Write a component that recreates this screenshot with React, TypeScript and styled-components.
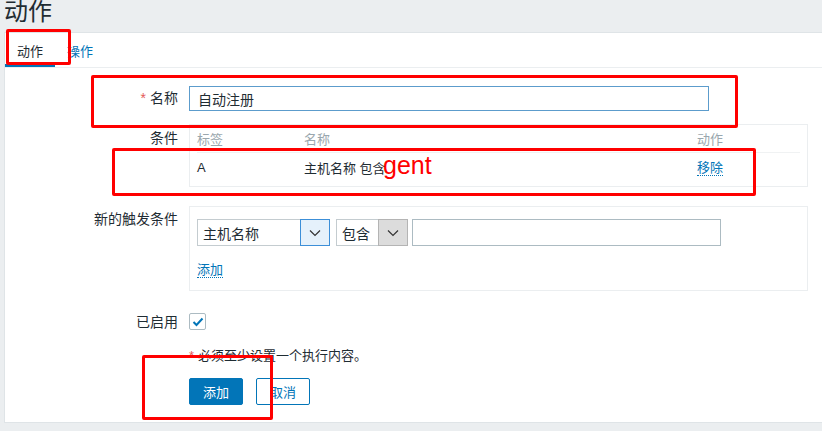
import styled, { createGlobalStyle } from 'styled-components';

const GlobalStyle = createGlobalStyle`
  html, body {
    margin: 0;
    padding: 0;
    background: #ebeef0;
    font-family: "Liberation Sans", "Noto Sans CJK SC", sans-serif;
    color: #1f2c33;
  }
  * {
    box-sizing: border-box;
  }
`;

const blue = '#0275b8';

const Page = styled.div`
  position: relative;
  width: 822px;
  height: 431px;
  overflow: hidden;
`;

const Header = styled.div`
  height: 32px;
  padding-left: 4px;
  display: flex;
  align-items: flex-end;
`;

const Title = styled.h1`
  margin: 0 0 8px 0;
  font-size: 24px;
  line-height: 24px;
  font-weight: normal;
  color: #1f2c33;
`;

const Panel = styled.div`
  margin-left: 4px;
  height: 391px;
  background: #fff;
  border: 1px solid #dfe4e7;
  border-right: none;
`;

const Tabs = styled.div`
  display: flex;
  height: 35px;
  border-bottom: 1px solid #ebeef0;
`;

const Tab = styled.div<{ $active?: boolean }>`
  padding: 0 12px;
  padding-top: 3px;
  display: flex;
  align-items: center;
  font-size: 13px;
  color: ${(p) => (p.$active ? '#1f2c33' : blue)};
  border-bottom: 3px solid ${(p) => (p.$active ? blue : 'transparent')};
`;

const Form = styled.div`
  display: grid;
  grid-template-columns: 173px 619px;
  column-gap: 11px;
  padding-top: 18px;
  font-size: 14px;
`;

const Label = styled.div<{ $top: number }>`
  text-align: right;
  padding-top: ${(p) => p.$top}px;
  line-height: 16px;
`;

const Star = styled.span`
  color: #e45959;
  margin-right: 4px;
`;

const Cell = styled.div<{ $mb: number }>`
  margin-bottom: ${(p) => p.$mb}px;
`;

const TextInput = styled.div<{ $w: number; $h: number; $border: string }>`
  width: ${(p) => p.$w}px;
  height: ${(p) => p.$h}px;
  border: 1px solid ${(p) => p.$border};
  padding: 0 8px;
  display: flex;
  align-items: center;
  font-size: 14px;
  background: #fff;
`;

const Box = styled.div<{ $h: number }>`
  width: 619px;
  height: ${(p) => p.$h}px;
  border: 1px solid #ebeef0;
  padding: 0 7px;
`;

const TableRow = styled.div<{ $h: number; $head?: boolean }>`
  display: grid;
  grid-template-columns: 107px 393px 1fr;
  height: ${(p) => p.$h}px;
  align-items: center;
  color: ${(p) => (p.$head ? '#9aa7ae' : '#1f2c33')};
  font-size: 13px;
  border-bottom: ${(p) => (p.$head ? '1px solid #f0f2f3' : 'none')};
`;

const Link = styled.span`
  color: ${blue};
  font-size: 13px;
  border-bottom: 1px dotted ${blue};
  line-height: 15px;
`;

const FilterRow = styled.div`
  display: flex;
  align-items: center;
  margin-top: 12px;
  margin-bottom: 15px;
`;

const Select = styled.div<{ $w: number; $mr: number }>`
  width: ${(p) => p.$w}px;
  height: 27px;
  margin-right: ${(p) => p.$mr}px;
  border: 1px solid #c4ccd0;
  display: flex;
  align-items: stretch;
`;

const SelectText = styled.div`
  flex: 1;
  display: flex;
  align-items: center;
  padding-left: 5px;
  font-size: 14px;
`;

const Arrow = styled.div<{ $focus?: boolean }>`
  width: 30px;
  display: flex;
  align-items: center;
  justify-content: center;
  background: ${(p) => (p.$focus ? '#e5f1fb' : '#dcdcdc')};
  border: 1px solid ${(p) => (p.$focus ? '#3c8fd8' : '#b4b4b4')};
  margin: -1px -1px -1px 0;
`;

const Check = styled.div`
  width: 17px;
  height: 17px;
  border: 1px solid #acbbc2;
  border-radius: 2px;
  display: flex;
  align-items: center;
  justify-content: center;
`;

const Hint = styled.div`
  font-size: 13px;
  line-height: 16px;
`;

const Buttons = styled.div`
  display: flex;
  gap: 13px;
`;

const Button = styled.div<{ $primary?: boolean }>`
  width: 54px;
  height: 27px;
  border-radius: 2px;
  border: 1px solid ${blue};
  background: ${(p) => (p.$primary ? blue : '#fff')};
  color: ${(p) => (p.$primary ? '#fff' : blue)};
  font-size: 13px;
  display: flex;
  align-items: center;
  justify-content: center;
`;

// red annotation frames drawn over the screenshot
const Mark = styled.div<{ $x: number; $y: number; $w: number; $h: number }>`
  position: absolute;
  left: ${(p) => p.$x}px;
  top: ${(p) => p.$y}px;
  width: ${(p) => p.$w}px;
  height: ${(p) => p.$h}px;
  border: 3px solid #ff0000;
  border-radius: 2px;
`;

const Scribble = styled.div`
  position: absolute;
  left: 383px;
  top: 151px;
  color: #ff0000;
  font-family: "Liberation Sans", sans-serif;
  font-size: 25px;
  line-height: 28px;
`;

const Chevron = () => (
  <svg width="12" height="8" viewBox="0 0 12 8">
    <path d="M1 1.5 L6 6.5 L11 1.5" fill="none" stroke="#333" strokeWidth="1.2" />
  </svg>
);

export default function App() {
  return (
    <Page>
      <GlobalStyle />
      <Header>
        <Title>动作</Title>
      </Header>
      <Panel>
        <Tabs>
          <Tab $active>动作</Tab>
          <Tab>操作</Tab>
        </Tabs>
        <Form>
          <Label $top={4}>
            <Star>*</Star>名称
          </Label>
          <Cell $mb={13}>
            <TextInput $w={520} $h={25} $border="#5c9ccc">
              自动注册
            </TextInput>
          </Cell>

          <Label $top={6}>条件</Label>
          <Cell $mb={19}>
            <Box $h={63}>
              <TableRow $h={28} $head>
                <span>标签</span>
                <span>名称</span>
                <span>动作</span>
              </TableRow>
              <TableRow $h={28}>
                <span>A</span>
                <span>主机名称 包含</span>
                <span>
                  <Link>移除</Link>
                </span>
              </TableRow>
            </Box>
          </Cell>

          <Label $top={5}>新的触发条件</Label>
          <Cell $mb={22}>
            <Box $h={85}>
              <FilterRow>
                <Select $w={133} $mr={6}>
                  <SelectText>主机名称</SelectText>
                  <Arrow $focus>
                    <Chevron />
                  </Arrow>
                </Select>
                <Select $w={72} $mr={4}>
                  <SelectText>包含</SelectText>
                  <Arrow>
                    <Chevron />
                  </Arrow>
                </Select>
                <TextInput $w={309} $h={27} $border="#acbbc2" />
              </FilterRow>
              <Link>添加</Link>
            </Box>
          </Cell>

          <Label $top={1}>已启用</Label>
          <Cell $mb={18}>
            <Check>
              <svg width="12" height="10" viewBox="0 0 12 10">
                <path d="M1.5 5 L4.5 8 L10.5 1.5" fill="none" stroke={blue} strokeWidth="2" />
              </svg>
            </Check>
          </Cell>

          <div />
          <Cell $mb={14}>
            <Hint>
              <Star>*</Star>必须至少设置一个执行内容。
            </Hint>
          </Cell>

          <div />
          <Buttons>
            <Button $primary>添加</Button>
            <Button>取消</Button>
          </Buttons>
        </Form>
      </Panel>

      <Mark $x={6} $y={29} $w={65} $h={36} />
      <Mark $x={91} $y={75} $w={647} $h={53} />
      <Mark $x={112} $y={148} $w={644} $h={48} />
      <Mark $x={142} $y={355} $w={131} $h={65} />
      <Scribble>gent</Scribble>
    </Page>
  );
}
